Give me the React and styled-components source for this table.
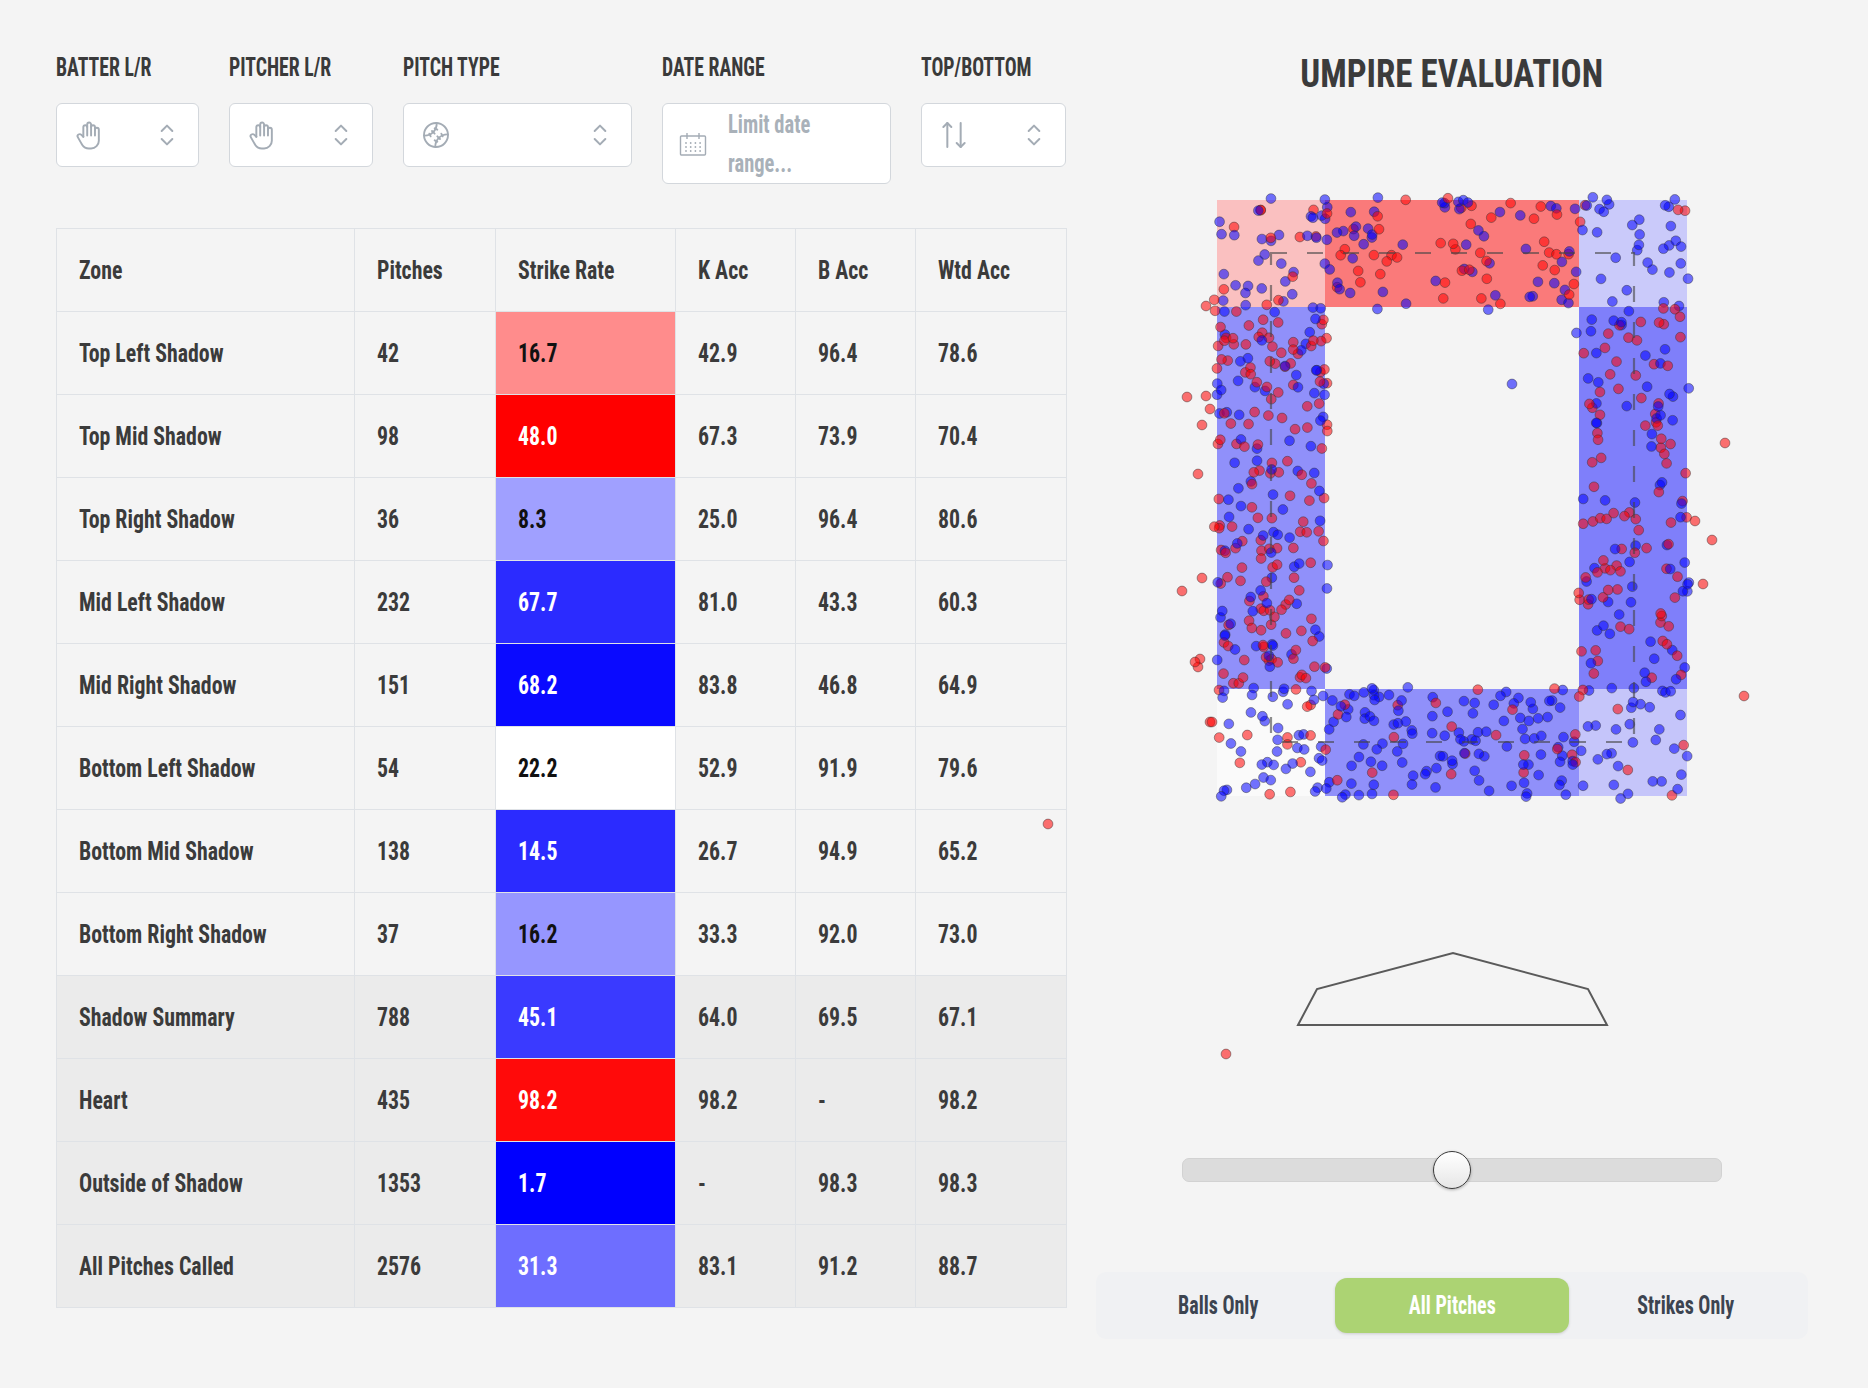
import React from 'react';
import styled, { createGlobalStyle } from 'styled-components';
import { TbHandStop, TbSelector, TbBallBaseball, TbArrowsUpDown } from 'react-icons/tb';

const FONT = `"Roboto Condensed", "DejaVu Sans Condensed", Roboto, "Liberation Sans", sans-serif`;

const GlobalStyle = createGlobalStyle`
  html, body { margin: 0; padding: 0; background: #f4f4f4; }
  body { font-family: ${FONT}; color: #3b3b3b; }
  * { box-sizing: border-box; }
`;

const Page = styled.div`
  display: flex;
  gap: 30px;
  padding: 0 60px 0 56px;
  width: 1868px;
`;

const LeftColumn = styled.div`
  width: 1010px;
  padding-top: 54px;
  display: flex;
  flex-direction: column;
`;

const FilterRow = styled.div`
  display: flex;
  gap: 30px;
  align-items: flex-start;
`;

const FilterGroup = styled.div`
  display: flex;
  flex-direction: column;
  width: ${(p) => p.$w}px;
`;

const Label = styled.div`
  font-size: 25px;
  font-weight: 700;
  line-height: 28px;
  margin-bottom: 21px;
  text-transform: uppercase;
  color: #3a3a3a;
  white-space: nowrap;
  transform: scaleX(0.79);
  transform-origin: left center;
`;

const SelectBox = styled.div`
  height: ${(p) => (p.$tall ? 81 : 64)}px;
  background: #fff;
  border: 1px solid #d3d7dc;
  border-radius: 6px;
  display: flex;
  align-items: center;
  justify-content: ${(p) => (p.$start ? 'flex-start' : 'space-between')};
  gap: 21px;
  padding: 0 15px 0 16px;
  color: #a4acb5;
`;

const Placeholder = styled.div`
  font-size: 25px;
  line-height: 39px;
  font-weight: 700;
  color: #a9b1b9;
  width: 140px;
  transform: scaleX(0.82);
  transform-origin: left center;
`;

const Table = styled.table`
  margin-top: 44px;
  width: 1010px;
  border-collapse: collapse;
  table-layout: fixed;
`;

const Cell = styled.td`
  border: 1px solid #dfe2e6;
  height: 83px;
  padding: 0 0 0 22px;
  text-align: left;
  font-size: 26px;
  font-weight: 700;
  color: ${(p) => p.$color || '#3b3b3b'};
  background: ${(p) => p.$bg || 'transparent'};
  white-space: nowrap;
`;

const HeadCell = styled(Cell).attrs({ as: 'th' })``;

const CellText = styled.span`
  display: inline-block;
  transform: scaleX(0.84);
  transform-origin: left center;
`;

const Row = styled.tr`
  background: ${(p) => (p.$summary ? '#ebebeb' : '#f4f4f4')};
`;

const RightColumn = styled.div`
  width: 712px;
  display: flex;
  flex-direction: column;
`;

const Title = styled.h1`
  margin: 0;
  height: 120px;
  padding-top: 55px;
  text-align: center;
  font-size: 38px;
  line-height: 1;
  font-weight: 700;
  color: #3b3b3b;
`;

const TitleText = styled.span`
  display: inline-block;
  transform: scaleX(0.92);
  transform-origin: center;
`;

const ChartSvg = styled.svg`
  display: block;
  overflow: visible;
`;

const SliderWrap = styled.div`
  position: relative;
  margin: 50px 86px 0;
  height: 40px;
  display: flex;
  align-items: center;
`;

const Track = styled.div`
  width: 100%;
  height: 24px;
  background: #dcdcdc;
  border: 1px solid #d2d2d2;
  border-radius: 7px;
`;

const Thumb = styled.div`
  position: absolute;
  left: 50%;
  top: 50%;
  width: 38px;
  height: 38px;
  transform: translate(-50%, -50%);
  border-radius: 50%;
  border: 1.5px solid #3a3a3a;
  background: linear-gradient(#ffffff, #f3f3f3 50%, #e6e6e6);
  box-shadow: 0 1px 3px rgba(0, 0, 0, 0.3);
`;

const Toggle = styled.div`
  margin-top: 82px;
  height: 67px;
  background: #f0f1f3;
  border-radius: 10px;
  padding: 6px;
  display: grid;
  grid-template-columns: repeat(3, 1fr);
`;

const Segment = styled.button`
  border: none;
  border-radius: 12px;
  font-family: ${FONT};
  font-size: 25px;
  font-weight: 700;
  cursor: pointer;
  background: ${(p) => (p.$active ? '#acd373' : 'transparent')};
  color: ${(p) => (p.$active ? '#ffffff' : '#3c4450')};
  box-shadow: ${(p) => (p.$active ? '0 1px 3px rgba(0,0,0,0.15)' : 'none')};
`;

const SegmentText = styled.span`
  display: inline-block;
  transform: scaleX(0.8);
  transform-origin: center;
`;

const CalendarIcon = () => (
  <svg width="28" height="24" viewBox="0 0 28 24" fill="none" stroke="currentColor" strokeWidth="1.4">
    <rect x="1.5" y="4" width="25" height="19" rx="1" />
    <line x1="8" y1="1" x2="8" y2="7" />
    <line x1="20" y1="1" x2="20" y2="7" />
    {[0, 1, 2, 3].map((c) =>
      [0, 1, 2].map((r) => (
        <circle key={`${c}-${r}`} cx={7 + c * 4.7} cy={11 + r * 4} r="0.9" fill="currentColor" stroke="none" />
      ))
    )}
  </svg>
);

function mulberry32(a) {
  return function () {
    a |= 0;
    a = (a + 0x6d2b79f5) | 0;
    let t = Math.imul(a ^ (a >>> 15), 1 | a);
    t = (t + Math.imul(t ^ (t >>> 7), 61 | t)) ^ t;
    return ((t ^ (t >>> 14)) >>> 0) / 4294967296;
  };
}

const XS = [121, 229, 483, 591];
const YS = [80, 187, 569, 676];

const CELLS = [
  { c: 0, r: 0, n: 42, p: 0.167, color: '#ff8c8c' },
  { c: 1, r: 0, n: 98, p: 0.48, color: '#ff0000' },
  { c: 2, r: 0, n: 36, p: 0.083, color: '#a0a0ff' },
  { c: 0, r: 1, n: 232, p: 0.6, color: '#2b2bff' },
  { c: 2, r: 1, n: 151, p: 0.6, color: '#0a0aff' },
  { c: 0, r: 2, n: 54, p: 0.222, color: '#ffffff' },
  { c: 1, r: 2, n: 138, p: 0.145, color: '#2b2bff' },
  { c: 2, r: 2, n: 37, p: 0.162, color: '#9696ff' },
];

const rnd = mulberry32(20240611);
const DOTS = [];
CELLS.forEach((cell) => {
  const x0 = XS[cell.c];
  const x1 = XS[cell.c + 1];
  const y0 = YS[cell.r];
  const y1 = YS[cell.r + 1];
  for (let i = 0; i < cell.n; i++) {
    DOTS.push({
      x: x0 - 3 + rnd() * (x1 - x0 + 6),
      y: y0 - 3 + rnd() * (y1 - y0 + 6),
      red: rnd() < cell.p,
    });
  }
});
const OUTSIDE = [
  [1206, 306], [1187, 397], [1206, 396], [1210, 409], [1202, 425], [1198, 474],
  [1182, 591], [1202, 578], [1200, 659], [1198, 667], [1210, 722], [1195, 662],
  [1725, 443], [1712, 540], [1703, 584], [1695, 521], [1744, 696], [1048, 824],
  [1226, 1054], [1212, 722],
];
OUTSIDE.forEach(([x, y]) => DOTS.push({ x: x - 1096, y: y - 120, red: true }));
DOTS.push({ x: 1512 - 1096, y: 384 - 120, red: false });

const ROWS = [
  ['Top Left Shadow', '42', '16.7', '#ff8c8c', '#111', '42.9', '96.4', '78.6'],
  ['Top Mid Shadow', '98', '48.0', '#ff0000', '#fff', '67.3', '73.9', '70.4'],
  ['Top Right Shadow', '36', '8.3', '#a0a0ff', '#111', '25.0', '96.4', '80.6'],
  ['Mid Left Shadow', '232', '67.7', '#2b2bff', '#fff', '81.0', '43.3', '60.3'],
  ['Mid Right Shadow', '151', '68.2', '#0a0aff', '#fff', '83.8', '46.8', '64.9'],
  ['Bottom Left Shadow', '54', '22.2', '#ffffff', '#111', '52.9', '91.9', '79.6'],
  ['Bottom Mid Shadow', '138', '14.5', '#2b2bff', '#fff', '26.7', '94.9', '65.2'],
  ['Bottom Right Shadow', '37', '16.2', '#9696ff', '#111', '33.3', '92.0', '73.0'],
  ['Shadow Summary', '788', '45.1', '#3a3aff', '#fff', '64.0', '69.5', '67.1', true],
  ['Heart', '435', '98.2', '#ff0a0a', '#fff', '98.2', '-', '98.2', true],
  ['Outside of Shadow', '1353', '1.7', '#0000ff', '#fff', '-', '98.3', '98.3', true],
  ['All Pitches Called', '2576', '31.3', '#6e6eff', '#fff', '83.1', '91.2', '88.7', true],
];

const COLS = [298, 141, 180, 120, 120, 151];

const Chart = () => (
  <ChartSvg width="712" height="980" viewBox="0 0 712 980">
    {CELLS.map((cell, i) => (
      <rect
        key={i}
        x={XS[cell.c]}
        y={YS[cell.r]}
        width={XS[cell.c + 1] - XS[cell.c]}
        height={YS[cell.r + 1] - YS[cell.r]}
        fill={cell.color}
        fillOpacity="0.5"
      />
    ))}
    {DOTS.map((d, i) => (
      <circle
        key={i}
        cx={d.x}
        cy={d.y}
        r="4.9"
        fill={d.red ? '#ff0000' : '#0000ff'}
        fillOpacity="0.55"
        stroke="#333"
        strokeOpacity="0.45"
        strokeWidth="1"
      />
    ))}
    <rect x="175" y="133" width="363" height="489" fill="none" stroke="#444" strokeOpacity="0.6" strokeWidth="2.2" strokeDasharray="16 20" />
    <polygon points="202,905 221,869 357,833 492,869 511,905" fill="none" stroke="#5a5a5a" strokeWidth="2" />
  </ChartSvg>
);

const Chevron = () => <TbSelector size={32} strokeWidth={1.5} />;

export default function App() {
  return (
    <>
      <GlobalStyle />
      <Page>
        <LeftColumn>
          <FilterRow>
            <FilterGroup $w={143}>
              <Label>Batter L/R</Label>
              <SelectBox>
                <TbHandStop size={31} strokeWidth={1.5} />
                <Chevron />
              </SelectBox>
            </FilterGroup>
            <FilterGroup $w={144}>
              <Label>Pitcher L/R</Label>
              <SelectBox>
                <TbHandStop size={31} strokeWidth={1.5} />
                <Chevron />
              </SelectBox>
            </FilterGroup>
            <FilterGroup $w={229}>
              <Label>Pitch Type</Label>
              <SelectBox>
                <TbBallBaseball size={32} strokeWidth={1.4} />
                <Chevron />
              </SelectBox>
            </FilterGroup>
            <FilterGroup $w={229}>
              <Label>Date Range</Label>
              <SelectBox $tall $start>
                <CalendarIcon />
                <Placeholder>Limit date range...</Placeholder>
              </SelectBox>
            </FilterGroup>
            <FilterGroup $w={145}>
              <Label>Top/Bottom</Label>
              <SelectBox>
                <TbArrowsUpDown size={32} strokeWidth={1.5} />
                <Chevron />
              </SelectBox>
            </FilterGroup>
          </FilterRow>
          <Table>
            <colgroup>
              {COLS.map((w, i) => (
                <col key={i} style={{ width: w }} />
              ))}
            </colgroup>
            <thead>
              <Row>
                {['Zone', 'Pitches', 'Strike Rate', 'K Acc', 'B Acc', 'Wtd Acc'].map((h) => (
                  <HeadCell key={h}>
                    <CellText>{h}</CellText>
                  </HeadCell>
                ))}
              </Row>
            </thead>
            <tbody>
              {ROWS.map((r) => (
                <Row key={r[0]} $summary={r[8]}>
                  <Cell><CellText>{r[0]}</CellText></Cell>
                  <Cell><CellText>{r[1]}</CellText></Cell>
                  <Cell $bg={r[3]} $color={r[4]}><CellText>{r[2]}</CellText></Cell>
                  <Cell><CellText>{r[5]}</CellText></Cell>
                  <Cell><CellText>{r[6]}</CellText></Cell>
                  <Cell><CellText>{r[7]}</CellText></Cell>
                </Row>
              ))}
            </tbody>
          </Table>
        </LeftColumn>
        <RightColumn>
          <Title>
            <TitleText>UMPIRE EVALUATION</TitleText>
          </Title>
          <Chart />
          <SliderWrap>
            <Track />
            <Thumb />
          </SliderWrap>
          <Toggle>
            <Segment><SegmentText>Balls Only</SegmentText></Segment>
            <Segment $active><SegmentText>All Pitches</SegmentText></Segment>
            <Segment><SegmentText>Strikes Only</SegmentText></Segment>
          </Toggle>
        </RightColumn>
      </Page>
    </>
  );
}
